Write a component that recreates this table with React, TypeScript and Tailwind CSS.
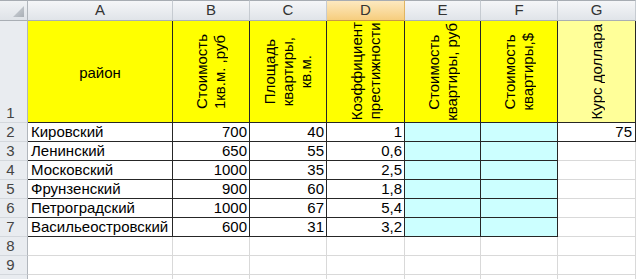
import React from "react";

const letters = ["A", "B", "C", "D", "E", "F", "G"];

const rows = [
  { n: 2, name: "Кировский", price: "700", area: "40", k: "1" },
  { n: 3, name: "Ленинский", price: "650", area: "55", k: "0,6" },
  { n: 4, name: "Московский", price: "1000", area: "35", k: "2,5" },
  { n: 5, name: "Фрунзенский", price: "900", area: "60", k: "1,8" },
  { n: 6, name: "Петроградский", price: "1000", area: "67", k: "5,4" },
  { n: 7, name: "Васильеостровский", price: "600", area: "31", k: "3,2" },
];

const Vertical: React.FC<{ lines: string[]; bg: string }> = ({ lines, bg }) => (
  <div className={`flex items-center justify-center border-r border-b border-[#262626] ${bg}`}>
    <div className="rotate-180 whitespace-nowrap text-center leading-[18px] [writing-mode:vertical-rl]">
      {lines.map((l, i) => (
        <div key={i}>{l}</div>
      ))}
    </div>
  </div>
);

const RowHead: React.FC<{ n?: number }> = ({ n }) => (
  <div className="flex items-end justify-center border-r border-b border-r-[#b1b6bc] border-b-[#d3d7dc] bg-[#e9ecf0] pr-[6px] leading-[18px] text-[#444]">
    {n}
  </div>
);

const Num: React.FC<{ v: string }> = ({ v }) => (
  <div className="flex items-end justify-end border-r border-b border-[#262626] pr-[2px] leading-[18px]">
    {v}
  </div>
);

export default function App() {
  return (
    <div className="h-[279px] w-[636px] overflow-hidden bg-white text-[15px] text-black [font-family:'Liberation_Sans',Arial,sans-serif]">
      <div className="grid grid-cols-[28px_145px_77px_77px_78px_76px_77px_78px] grid-rows-[21px_102px_repeat(9,19px)]">
        {/* column headers */}
        <div className="relative border-t border-r border-b border-t-[#a7acb2] border-r-[#b1b6bc] border-b-[#a9aeb4] bg-gradient-to-b from-[#f1f3f5] to-[#dfe3e8]">
          <svg className="absolute right-[3px] bottom-[3px]" width="11" height="11" viewBox="0 0 11 11">
            <defs>
              <linearGradient id="tri" x1="0" y1="0" x2="1" y2="1">
                <stop offset="0" stopColor="#d2d6db" />
                <stop offset="1" stopColor="#a9afb6" />
              </linearGradient>
            </defs>
            <polygon points="11,0 11,11 0,11" fill="url(#tri)" />
          </svg>
        </div>
        {letters.map((l) => (
          <div
            key={l}
            className={
              l === "D"
                ? "flex items-center justify-center border-t border-r border-b border-t-[#a7acb2] border-r-[#e0b461] border-b-[#c99a45] bg-gradient-to-b from-[#fde9bf] to-[#f6cd7d] text-[#333]"
                : "flex items-center justify-center border-t border-r border-b border-t-[#a7acb2] border-r-[#c6cbd1] border-b-[#a9aeb4] bg-gradient-to-b from-[#f5f6f8] to-[#e0e4e9] text-[#333]"
            }
          >
            {l}
          </div>
        ))}

        {/* row 1 */}
        <RowHead n={1} />
        <div className="flex items-center justify-center border-r border-b border-[#262626] bg-[#ffff00] pt-[3px]">
          район
        </div>
        <Vertical bg="bg-[#ffff00]" lines={["Стоимость", "1кв.м. ,руб"]} />
        <Vertical bg="bg-[#ffff00]" lines={["Площадь", "квартиры,", "кв.м."]} />
        <Vertical bg="bg-[#ffff00]" lines={["Коэффициент", "престижности"]} />
        <Vertical bg="bg-[#ffff00]" lines={["Стоимость", "квартиры, руб"]} />
        <Vertical bg="bg-[#ffff00]" lines={["Стоимость", "квартиры,$"]} />
        <Vertical bg="bg-[#ffff99]" lines={["Курс доллара"]} />

        {/* data rows */}
        {rows.map((r) => (
          <React.Fragment key={r.n}>
            <RowHead n={r.n} />
            <div className="flex items-end border-r border-b border-[#262626] pl-[3px] leading-[18px]">
              {r.name}
            </div>
            <Num v={r.price} />
            <Num v={r.area} />
            <Num v={r.k} />
            <div className="border-r border-b border-[#262626] bg-[#ccffff]" />
            <div className="border-r border-b border-[#262626] bg-[#ccffff]" />
            {r.n === 2 ? (
              <div className="flex items-end justify-end border-r border-b border-[#262626] pr-[3px] leading-[18px]">
                75
              </div>
            ) : (
              <div className="border-r border-b border-[#d9d9d9]" />
            )}
          </React.Fragment>
        ))}

        {/* empty rows */}
        {[8, 9, 10].map((n) => (
          <React.Fragment key={n}>
            <RowHead n={n < 10 ? n : undefined} />
            {letters.map((l) => (
              <div key={l} className="border-r border-b border-[#d9d9d9]" />
            ))}
          </React.Fragment>
        ))}
      </div>
    </div>
  );
}
